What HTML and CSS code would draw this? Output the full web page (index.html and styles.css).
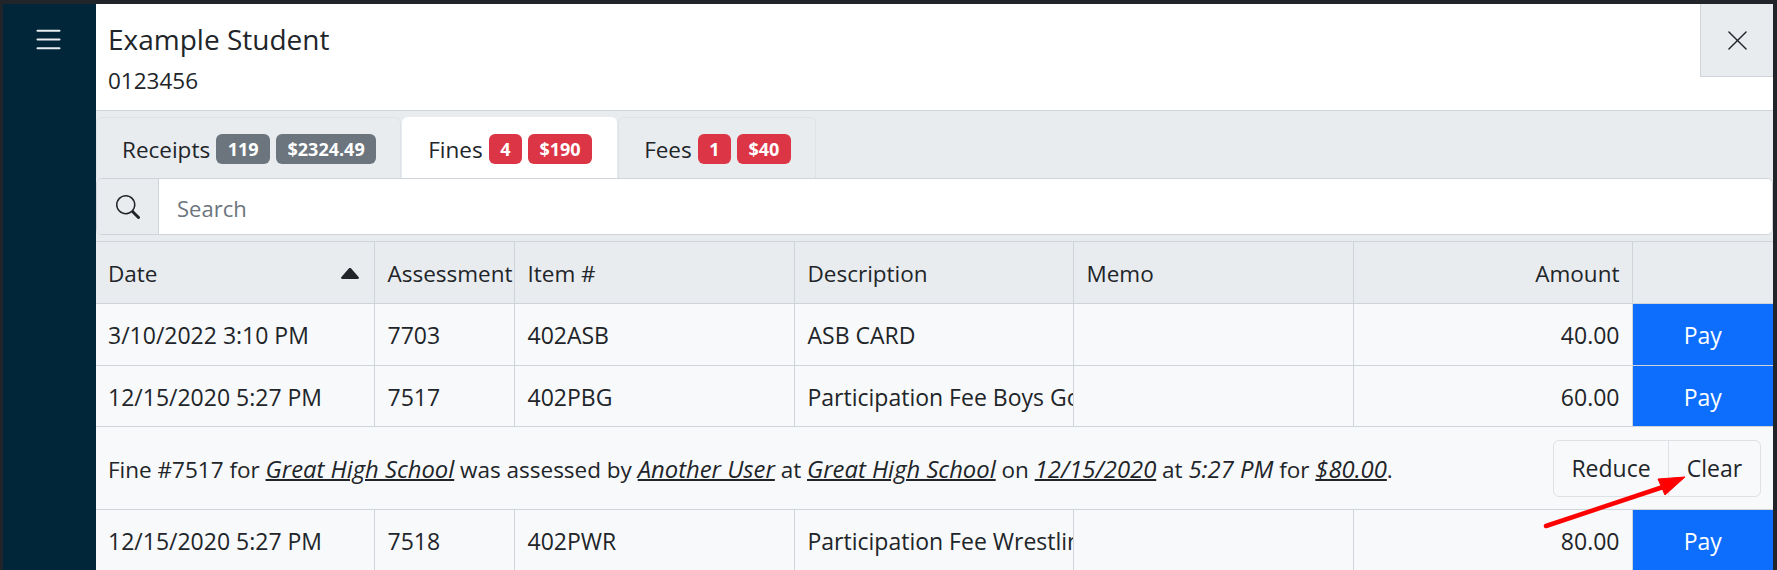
FILE: index.html
```html
<!DOCTYPE html>
<html lang="en">

<head>
    <meta charset="UTF-8">
    <meta name="viewport" content="width=device-width, initial-scale=1.0">
    <title>Example Student</title>
    <link rel="stylesheet" href="styles.css">
</head>

<body>
    <div class="shell">
        <nav class="sidebar">
            <svg class="menu-icon" viewBox="0 0 16 16" fill="currentColor">
                <path d="M2.5 12a.5.5 0 0 1 .5-.5h10a.5.5 0 0 1 0 1H3a.5.5 0 0 1-.5-.5zm0-4a.5.5 0 0 1 .5-.5h10a.5.5 0 0 1 0 1H3a.5.5 0 0 1-.5-.5zm0-4a.5.5 0 0 1 .5-.5h10a.5.5 0 0 1 0 1H3a.5.5 0 0 1-.5-.5z" />
            </svg>
        </nav>
        <main class="panel">
            <header class="student">
                <div class="student-info">
                    <h1>Example Student</h1>
                    <p>0123456</p>
                </div>
                <button class="close-btn" aria-label="Close">
                    <svg viewBox="0 0 20 20" stroke="currentColor" stroke-width="1.5" stroke-linecap="round">
                        <path d="M1 1 19 19M19 1 1 19" />
                    </svg>
                </button>
            </header>

            <div class="tabs">
                <a class="tab">Receipts<span class="badge grey">119</span><span class="badge grey">$2324.49</span></a>
                <a class="tab active">Fines<span class="badge red">4</span><span class="badge red">$190</span></a>
                <a class="tab">Fees<span class="badge red">1</span><span class="badge red">$40</span></a>
            </div>

            <div class="search">
                <span class="search-icon">
                    <svg viewBox="0 0 16 16" fill="currentColor">
                        <path d="M11.742 10.344a6.5 6.5 0 1 0-1.397 1.398h-.001c.03.04.062.078.098.115l3.85 3.85a1 1 0 0 0 1.415-1.414l-3.85-3.85a1.007 1.007 0 0 0-.115-.1zM12 6.5a5.5 5.5 0 1 1-11 0 5.5 5.5 0 0 1 11 0z" />
                    </svg>
                </span>
                <input type="text" placeholder="Search">
            </div>

            <table class="fines">
                <colgroup>
                    <col class="col-date">
                    <col class="col-assess">
                    <col class="col-wide">
                    <col class="col-desc">
                    <col class="col-wide">
                    <col class="col-desc">
                    <col class="col-pay">
                </colgroup>
                <thead>
                    <tr>
                        <th>
                            <div class="sort-head">Date
                                <svg class="sort-icon" viewBox="0 0 18 11" fill="currentColor">
                                    <path d="M7.8.6a1.5 1.5 0 0 1 2.4 0l7.4 8.3c.7.8.2 2.1-1 2.1H1.4C.2 11-.3 9.700.4 8.900z" />
                                </svg>
                            </div>
                        </th>
                        <th>Assessment</th>
                        <th>Item #</th>
                        <th>Description</th>
                        <th>Memo</th>
                        <th class="amount">Amount</th>
                        <th></th>
                    </tr>
                </thead>
                <tbody>
                    <tr class="first">
                        <td>3/10/2022 3:10 PM</td>
                        <td>7703</td>
                        <td>402ASB</td>
                        <td>ASB CARD</td>
                        <td></td>
                        <td class="amount">40.00</td>
                        <td class="pay">Pay</td>
                    </tr>
                    <tr>
                        <td>12/15/2020 5:27 PM</td>
                        <td>7517</td>
                        <td>402PBG</td>
                        <td>Participation Fee Boys Golf</td>
                        <td></td>
                        <td class="amount">60.00</td>
                        <td class="pay">Pay</td>
                    </tr>
                    <tr class="detail">
                        <td colspan="7">
                            <div class="detail-row">
                                <p>Fine #7517 for <a>Great High School</a> was assessed by <a>Another User</a> at <a>Great High School</a> on <a>12/15/2020</a> at <em>5:27 PM</em> for <a>$80.00</a>.</p>
                                <div class="btn-group">
                                    <button>Reduce</button>
                                    <button>Clear</button>
                                </div>
                            </div>
                        </td>
                    </tr>
                    <tr>
                        <td>12/15/2020 5:27 PM</td>
                        <td>7518</td>
                        <td>402PWR</td>
                        <td>Participation Fee Wrestling</td>
                        <td></td>
                        <td class="amount">80.00</td>
                        <td class="pay">Pay</td>
                    </tr>
                </tbody>
            </table>
        </main>
    </div>

    <!-- red annotation arrow drawn over the screenshot -->
    <svg class="arrow" viewBox="0 0 150 60" fill="#ff0000" stroke="#ff0000">
        <path d="M3 52 120 13" stroke-width="4.5" stroke-linecap="round" />
        <path d="M142 3 122 21 115 5z" stroke-width="1" />
    </svg>
</body>

</html>
```

FILE: styles.css
```css
* {
    box-sizing: border-box;
}

body {
    margin: 0;
    height: 570px;
    overflow: hidden;
    background-color: #212529;
    color: #212529;
    font-family: "Open Sans", "Noto Sans", sans-serif;
    font-size: 23px;
}

.shell {
    display: flex;
    height: 570px;
    padding: 4px 4px 0 3px;
}

.sidebar {
    flex: 0 0 93px;
    background-color: #022639;
    color: #e9ecef;
    display: flex;
    justify-content: center;
}

.menu-icon {
    width: 35px;
    height: 35px;
    margin: 18px 2px 0 0;
}

.panel {
    flex: 1;
    min-width: 0;
    background-color: #e9ecef;
}

/* header */
.student {
    display: flex;
    justify-content: space-between;
    align-items: flex-start;
    height: 107px;
    background-color: #fff;
    border-bottom: 1px solid #ced4da;
}

.student-info {
    padding: 17px 0 0 12px;
}

.student h1 {
    margin: 0;
    font-size: 28px;
    font-weight: 400;
    line-height: 36px;
}

.student p {
    margin: 9px 0 0;
    font-size: 22.5px;
    line-height: 30px;
}

.close-btn {
    width: 73px;
    height: 73px;
    padding: 0;
    border: 0;
    border-left: 1px solid #ced4da;
    border-bottom: 1px solid #ced4da;
    background-color: #e9ecef;
    color: #212529;
    display: flex;
    align-items: center;
    justify-content: center;
}

.close-btn svg {
    width: 19px;
    height: 19px;
}

/* tabs */
.tabs {
    display: flex;
    padding-top: 6px;
    height: 67px;
    gap: 1px;
}

.tab {
    display: flex;
    align-items: center;
    height: 61px;
    padding: 2px 24px 0 25px;
    border: 1px solid #dee2e6;
    border-bottom: 0;
    border-radius: 6px 6px 0 0;
    font-size: 22.5px;
}

.tab.active {
    background-color: #fff;
    border-color: #fff;
}

.badge {
    display: inline-block;
    height: 30px;
    line-height: 30px;
    padding: 0 11.5px;
    margin-left: 6px;
    border-radius: 6px;
    color: #fff;
    font-size: 18px;
    font-weight: 700;
}

.badge.grey {
    background-color: #6c757d;
}

.badge.red {
    background-color: #dc3545;
}

/* search */
.search {
    display: flex;
    height: 57px;
    border: 1px solid #ced4da;
    border-radius: 6px;
    background-color: #fff;
    overflow: hidden;
}

.search-icon {
    flex: 0 0 62px;
    display: flex;
    align-items: center;
    justify-content: center;
    background-color: #e9ecef;
    border-right: 1px solid #ced4da;
}

.search-icon svg {
    width: 24px;
    height: 24px;
}

.search input {
    flex: 1;
    border: 0;
    outline: 0;
    padding: 2px 18px 0;
    font: inherit;
    font-size: 22px;
    color: #212529;
}

.search input::placeholder {
    color: #6c757d;
    opacity: 1;
}

/* table */
.fines {
    width: 1677px;
    margin-top: 6px;
    border-collapse: collapse;
    table-layout: fixed;
    border-top: 1px solid #ced4da;
}

.col-date {
    width: 278px;
}

.col-desc {
    width: 279px;
}

.col-assess {
    width: 140px;
}

.col-wide {
    width: 280px;
}

.col-pay {
    width: 141px;
}

.fines th,
.fines td {
    height: 61px;
    padding: 2px 0 0 13px;
    border-left: 1px solid #ced4da;
    border-bottom: 1px solid #ced4da;
    font-weight: 400;
    text-align: left;
    white-space: nowrap;
    overflow: hidden;
}

.fines th:first-child,
.fines td:first-child {
    border-left: 0;
    padding-left: 12px;
}

.fines td {
    background-color: #f8f9fa;
}

.fines th {
    height: 62px;
    background-color: #e9ecef;
    font-size: 22.5px;
}

.fines .first td {
    height: 62px;
    padding-top: 0;
}

.fines .amount {
    text-align: right;
    padding-left: 0;
    padding-right: 12px;
}

.fines .pay {
    padding-left: 0;
    background-color: #0d6efd;
    color: #fff;
    text-align: center;
}

.sort-head {
    display: flex;
    align-items: center;
    justify-content: space-between;
    padding-right: 15px;
}

.sort-icon {
    width: 18px;
    height: 11px;
}

.fines .detail td {
    height: 83px;
    padding: 0 12px 0 12px;
}

.detail-row {
    display: flex;
    align-items: center;
    justify-content: space-between;
}

.detail-row p {
    margin: 2px 0 0;
    font-size: 22.5px;
}

.detail-row a,
.detail-row em {
    font-size: 23.8px;
    font-style: italic;
}

.detail-row a {
    text-decoration: underline;
    text-decoration-thickness: 2px;
}

.btn-group {
    display: flex;
    height: 57px;
    border: 1px solid #dee2e6;
    border-radius: 6px;
}

.btn-group button {
    padding: 0;
    border: 0;
    background: none;
    color: #212529;
    font: inherit;
    width: 114px;
}

.btn-group button + button {
    border-left: 1px solid #dee2e6;
    width: 92px;
}

.arrow {
    position: absolute;
    left: 1543px;
    top: 474px;
    width: 150px;
    height: 60px;
}
```
